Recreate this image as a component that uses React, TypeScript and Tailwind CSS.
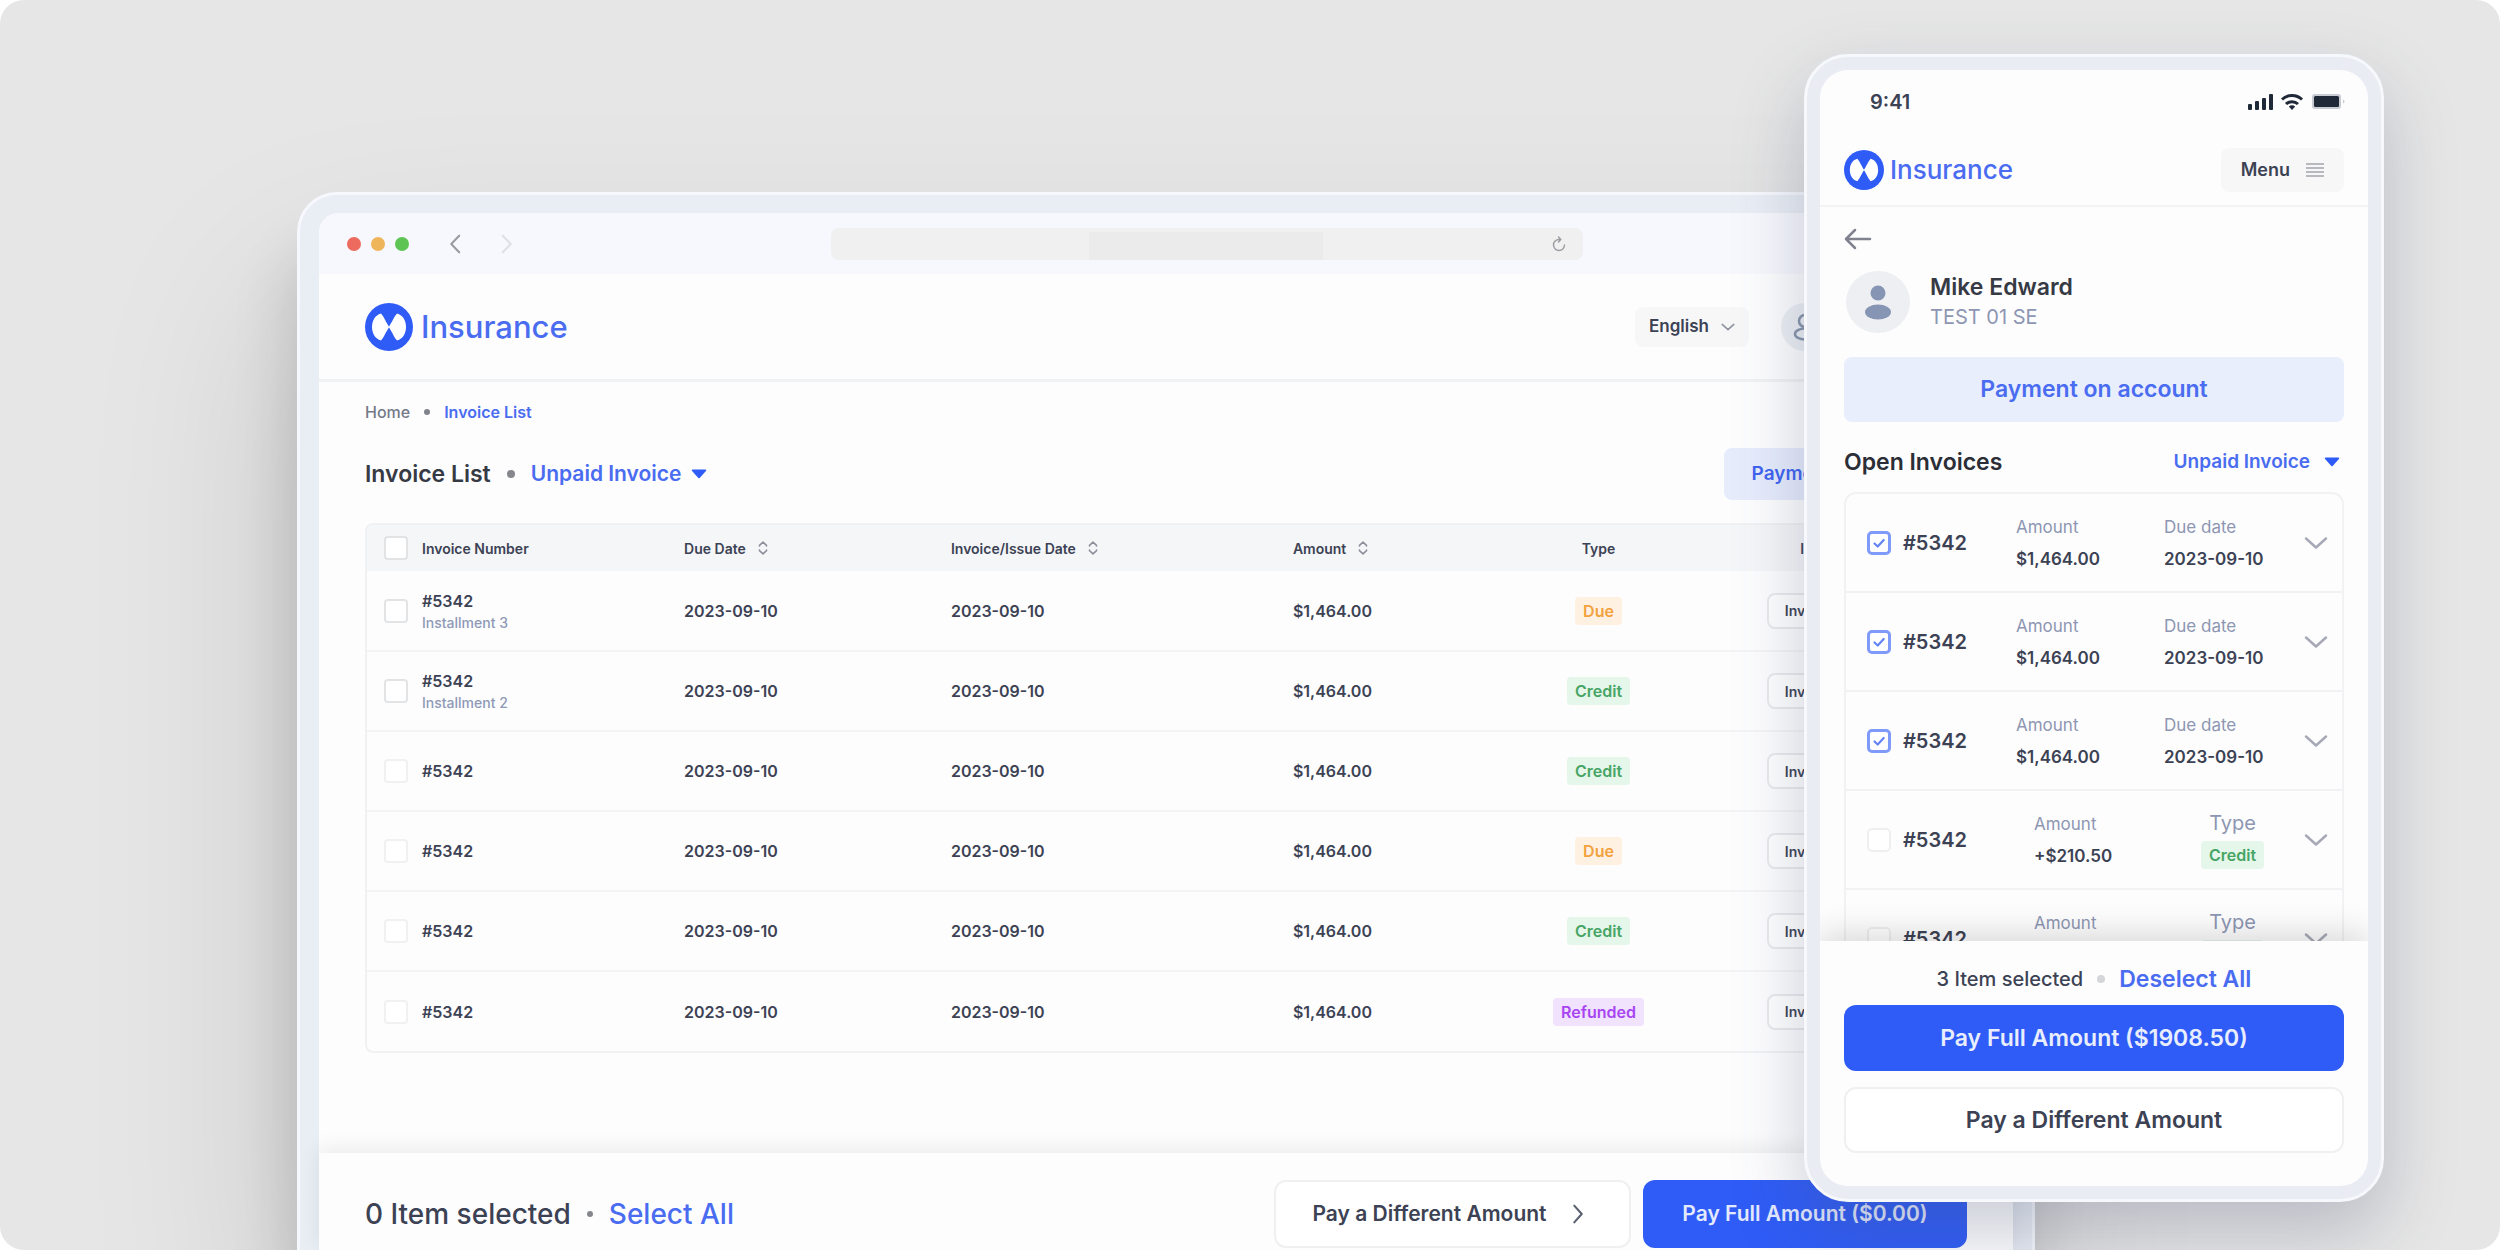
import { ReactNode } from "react";

const ink = "text-[#3c4254]";

function Logo({ small = false }: { small?: boolean }) {
  return (
    <a href="#" className={small ? "flex items-center gap-1.5" : "flex items-center gap-2"}>
      <svg viewBox="0 0 48 48" className={small ? "size-10" : "size-12"} aria-hidden="true">
        <circle cx="24" cy="24" r="24" fill="#2f5cf6" />
        <path d="M16 10.500 C10 12 7 18 7 24 s3 12 9 13.500 C18.500 35 21.500 28 24.200 24 C21.500 20 18.500 13 16 10.500Z" fill="#fff" />
        <path d="M32 10.500 C38 12 41 18 41 24 s-3 12 -9 13.500 C29.500 35 26.500 28 23.800 24 C26.500 20 29.500 13 32 10.500Z" fill="#fff" />
      </svg>
      <span className={small ? "text-[26px] leading-8 font-medium text-[#4a6cf0]" : "text-[31px] leading-10 font-medium text-[#4a6cf0]"}>Insurance</span>
    </a>
  );
}

function Chevron({ className, d = "M2 5 L12 14 L22 5", box = "0 0 24 19" }: { className: string; d?: string; box?: string }) {
  return (
    <svg viewBox={box} className={className} fill="none" stroke="currentColor" strokeWidth="2.500" strokeLinecap="round" strokeLinejoin="round" aria-hidden="true">
      <path d={d} />
    </svg>
  );
}

function Caret() {
  return (
    <svg viewBox="0 0 16 10" className="h-2.5 w-4" fill="#2f5cf6" aria-hidden="true">
      <path d="M1.500 0.500h13a.8.8 0 0 1 .6 1.300L8.700 9a1 1 0 0 1-1.400 0L.9 1.800A.8.8 0 0 1 1.500.500z" />
    </svg>
  );
}

function Sort() {
  return (
    <svg viewBox="0 0 10 14" className="h-3.5 w-2.5" fill="none" stroke="#8b8f9a" strokeWidth="1.600" strokeLinecap="round" strokeLinejoin="round" aria-hidden="true">
      <path d="M1.500 5V4.300L5 1.200l3.500 3.100V5M1.500 9v.7L5 12.800l3.500-3.100V9" />
    </svg>
  );
}

const badgeStyle: Record<string, string> = {
  Due: "bg-[#fef1e2] text-[#f3a13c]",
  Credit: "bg-[#e5f6ea] text-[#46a564]",
  Refunded: "bg-[#f1e2fd] text-[#a845f3]",
};

function Badge({ type }: { type: string }) {
  return <span className={`inline-block rounded-[4px] px-2 text-base leading-7 font-semibold ${badgeStyle[type]}`}>{type}</span>;
}

function Check({ label, faint = false }: { label: string; faint?: boolean }) {
  return (
    <input
      type="checkbox"
      aria-label={label}
      className={`block size-6 appearance-none rounded-[4px] border-2 bg-white ${faint ? "border-[#f1f1f2]" : "border-[#e2e3e5]"}`}
    />
  );
}

const rows = [
  { note: "Installment 3", type: "Due" },
  { note: "Installment 2", type: "Credit" },
  { note: "", type: "Credit" },
  { note: "", type: "Due" },
  { note: "", type: "Credit" },
  { note: "", type: "Refunded" },
];

function Th({ children, sort = false, center = false }: { children: ReactNode; sort?: boolean; center?: boolean }) {
  return (
    <th scope="col" className={`h-[46px] p-0 font-semibold ${center ? "text-center" : "text-left"}`}>
      {sort ? (
        <button className="flex items-center gap-3">
          {children}
          <Sort />
        </button>
      ) : (
        children
      )}
    </th>
  );
}

function InvoiceTable() {
  return (
    <div className="overflow-hidden rounded-lg border-2 border-[#f0f1f3]">
      <table className={`w-full table-fixed border-collapse ${ink}`}>
        <colgroup>
          <col className="w-[55px]" />
          <col className="w-[16.400%]" />
          <col className="w-[16.700%]" />
          <col className="w-[21.400%]" />
          <col className="w-[13.750%]" />
          <col className="w-[10.750%]" />
          <col />
        </colgroup>
        <thead className="bg-[#f5f6f8] text-[14px]">
          <tr>
            <th className="p-0 pl-[17px]">
              <Check label="Select all invoices" />
            </th>
            <Th>Invoice Number</Th>
            <Th sort>Due Date</Th>
            <Th sort>Invoice/Issue Date</Th>
            <Th sort>Amount</Th>
            <Th center>Type</Th>
            <Th center>Invoice</Th>
          </tr>
        </thead>
        <tbody className="text-base font-semibold">
          {rows.map((r, i) => (
            <tr key={i} className="h-20 border-b-2 border-[#f4f4f6] last:border-b-0">
              <td className="p-0 pl-[17px]">
                <Check label={`Select row ${i + 1}`} faint={!r.note} />
              </td>
              <td className="p-0">
                <div className="leading-6">#5342</div>
                {r.note && <div className="text-[14px] leading-5 font-medium text-[#8e99b6]">{r.note}</div>}
              </td>
              <td className="p-0">2023-09-10</td>
              <td className="p-0">2023-09-10</td>
              <td className="p-0">$1,464.00</td>
              <td className="p-0 text-center">
                <Badge type={r.type} />
              </td>
              <td className="p-0 text-center">
                <button className="h-9 rounded-lg border-2 border-[#e9eaed] bg-white px-4 text-[14px]">Invoice PDF</button>
              </td>
            </tr>
          ))}
        </tbody>
      </table>
    </div>
  );
}

function Browser() {
  return (
    <section className="mr-[465px] ml-[297px] flex min-h-0 flex-1 flex-col rounded-t-[40px] border-[3px] border-b-0 border-[#f6f8fd] bg-[#e9edf4] px-[19px] pt-[18px] shadow-[-6px_60px_60px_rgba(0,0,0,0.140),-20px_100px_200px_rgba(0,0,0,0.120)]">
      <div className="flex min-h-0 flex-1 flex-col rounded-t-[20px] bg-[#fdfdfe]">
        <div className="grid h-[61px] shrink-0 grid-cols-[484px_752px_1fr] items-center rounded-t-[20px] bg-[#f7f8fd] px-7">
          <div className="flex items-center gap-2.5">
            <span className="size-3.5 rounded-full bg-[#ec6a5e]" />
            <span className="size-3.5 rounded-full bg-[#eeb55a]" />
            <span className="size-3.5 rounded-full bg-[#5ec454]" />
            <button aria-label="Back" className="ml-[30px] text-[#9a9ba3]">
              <Chevron className="h-5 w-3" box="0 0 14 24" d="M12 2 L2.500 12 L12 22" />
            </button>
            <button aria-label="Forward" className="ml-[30px] text-[#dfe0e6]">
              <Chevron className="h-5 w-3" box="0 0 14 24" d="M2 2 L11.500 12 L2 22" />
            </button>
          </div>
          <div className="flex h-8 items-stretch rounded-lg bg-[#f0f0f1] pr-4">
            <input aria-label="Address" className="mt-1 mr-auto ml-[258px] w-[234px] bg-[#ebebec]" />
            <button aria-label="Reload" className="text-[#9b9ca1]">
              <svg viewBox="0 0 16 16" className="size-4" fill="none" stroke="currentColor" strokeWidth="1.400" strokeLinecap="round" aria-hidden="true">
                <path d="M13.500 9A5.500 5.500 0 1 1 8 3.500h1.500M7.500 1l2.300 2.500L7.500 6" />
              </svg>
            </button>
          </div>
        </div>

        <header className="flex h-[108px] shrink-0 items-center justify-between border-b-[3px] border-[#f1f2f3] px-[46px]">
          <Logo />
          <div className="flex items-center gap-8">
            <button className={`flex h-10 items-center gap-3 rounded-lg bg-[#f7f7f8] px-3.5 text-[17px] font-semibold ${ink}`}>
              English
              <Chevron className="h-3.5 w-3.5 text-[#8d919c]" />
            </button>
            <button aria-label="Account" className="flex h-12 w-[186px] items-center gap-3 rounded-full bg-[#eceff3] px-3 text-[#8795ab]">
              <svg viewBox="0 0 24 28" className="h-7 w-6" fill="none" stroke="currentColor" strokeWidth="2.500" aria-hidden="true">
                <circle cx="12" cy="8" r="6" />
                <ellipse cx="12" cy="21" rx="10" ry="5.500" />
              </svg>
            </button>
          </div>
        </header>

        <main className="flex min-h-0 flex-1 flex-col px-[46px]">
          <nav aria-label="Breadcrumb" className="mt-[18px] flex items-center gap-3.5 text-base leading-6">
            <a href="#" className="font-medium text-[#757a88]">Home</a>
            <span className="size-1.5 rounded-full bg-[#80838c]" />
            <a href="#" className="font-semibold text-[#4a6cf0]">Invoice List</a>
          </nav>
          <div className="mt-6 flex items-center justify-between">
            <div className="flex items-center gap-4">
              <h1 className="text-[23px] leading-8 font-semibold text-[#363a44]">Invoice List</h1>
              <span className="size-2 rounded-full bg-[#85878d]" />
              <button className="flex items-center gap-2.5 text-[21px] leading-8 font-semibold text-[#4a6cf0]">
                Unpaid Invoice
                <Caret />
              </button>
            </div>
            <button className="h-[52px] w-[243px] rounded-lg bg-[#e6ecfc] text-[19px] font-semibold text-[#3f63f0]">Payment on account</button>
          </div>
          <div className="mt-[23px]">
            <InvoiceTable />
          </div>
        </main>

        <footer className="flex h-[97px] shrink-0 items-center justify-between bg-[#fdfdfe] px-[46px] pt-6 shadow-[0_-4px_20px_rgba(0,0,0,0.080)]">
          <div className="flex items-center gap-4 text-[28px] leading-10 font-medium">
            <span className={ink}>0 Item selected</span>
            <span className="size-1.5 rounded-full bg-[#85878d]" />
            <button className="text-[#4a6cf0]">Select All</button>
          </div>
          <div className="flex gap-3">
            <button className={`flex h-[68px] w-[357px] items-center justify-center gap-6 rounded-xl border-2 border-[#f0f0f2] bg-white pr-2 text-[21px] font-semibold ${ink}`}>
              Pay a Different Amount
              <Chevron className="h-5 w-3.5 text-[#5b6070]" box="0 0 14 24" d="M2.500 2 L11.500 12 L2.500 22" />
            </button>
            <button className="h-[68px] w-[324px] rounded-xl bg-[#2f5cf6] text-[21px] font-semibold text-[#e4eafe]">Pay Full Amount ($0.00)</button>
          </div>
        </footer>
      </div>
    </section>
  );
}

function Item({ selected = false }: { selected?: boolean }) {
  return (
    <li className="flex h-[99px] shrink-0 items-center border-b-2 border-[#f2f2f4] pl-[21px]">
      <label className={`flex items-center gap-3 text-[20px] font-semibold ${ink} ${selected ? "w-[149px]" : "w-[167px]"}`}>
        <span className="relative block size-6">
          <input
            type="checkbox"
            defaultChecked={selected}
            className={`block size-6 appearance-none rounded-[5px] bg-white ${selected ? "border-[3px] border-[#7f9af8]" : "border-2 border-[#efeff1]"}`}
          />
          {selected && (
            <svg viewBox="0 0 24 24" className="absolute inset-0 size-6" fill="none" stroke="#6484f6" strokeWidth="2.200" strokeLinecap="round" strokeLinejoin="round" aria-hidden="true">
              <path d="M7.500 12.500l3.200 3 6-6.500" />
            </svg>
          )}
        </span>
        #5342
      </label>
      <div className={`flex flex-col gap-2 ${selected ? "w-[148px]" : "w-[167px]"}`}>
        <span className="text-[17px] leading-6 text-[#8d96b2]">Amount</span>
        <span className={`text-[17px] leading-6 font-semibold ${ink}`}>{selected ? "$1,464.00" : "+$210.50"}</span>
      </div>
      {selected ? (
        <div className="flex flex-col gap-2">
          <span className="text-[17px] leading-6 text-[#8d96b2]">Due date</span>
          <span className={`text-[17px] leading-6 font-semibold ${ink}`}>2023-09-10</span>
        </div>
      ) : (
        <div className="flex flex-col items-center gap-1.5">
          <span className="text-[20px] leading-6 text-[#8d96b2]">Type</span>
          <Badge type="Credit" />
        </div>
      )}
      <button aria-label="Show details" className="mr-3.5 ml-auto text-[#a7a9b6]">
        <Chevron className="h-5 w-6" />
      </button>
    </li>
  );
}

function Phone() {
  return (
    <section className={`absolute top-[54px] right-[116px] flex h-[1148px] w-[580px] flex-col rounded-[44px] border-[3px] border-[#f6f8fc] bg-[#e9edf3] p-[13px] shadow-[0_30px_70px_rgba(70,80,110,0.280)] ${ink}`}>
      <div className="flex min-h-0 flex-1 flex-col overflow-hidden rounded-[28px] bg-[#fdfdfe]">
        <div className="flex h-[67px] shrink-0 items-center justify-between pr-[22px] pb-[3px] pl-[50px]">
          <span className="text-[20px] font-semibold">9:41</span>
          <svg viewBox="0 0 98 20" className="h-5 w-[98px]" fill="#1f2937" aria-hidden="true">
            <rect x="0" y="12" width="4" height="6" rx="1" />
            <rect x="7" y="9" width="4" height="9" rx="1" />
            <rect x="14" y="6" width="4" height="12" rx="1" />
            <rect x="21" y="2" width="4" height="16" rx="1" />
            <g fill="none" stroke="#1f2937" strokeWidth="3">
              <path d="M34 7.500a14.500 14.500 0 0 1 20 0" />
              <path d="M38 12a9 9 0 0 1 12 0" />
            </g>
            <path d="M44 18l-3.200-3.400a4.800 4.800 0 0 1 6.400 0z" />
            <rect x="64" y="2" width="29" height="15" rx="3" fill="#c9ccd2" />
            <rect x="66" y="4" width="25" height="11" rx="1.500" />
            <path d="M95 7.500c2 .8 2 3.200 0 4z" fill="#c9ccd2" />
          </svg>
        </div>
        <header className="flex h-[70px] shrink-0 items-center justify-between border-b-2 border-[#f3f3f5] px-6 pb-[3px]">
          <Logo small />
          <button className="flex h-11 items-center gap-4 rounded-lg bg-[#f7f7f8] px-5 text-[18px] font-semibold">
            Menu
            <svg viewBox="0 0 18 14" className="h-3.5 w-[18px]" stroke="#a3a5ab" strokeWidth="1.500" aria-hidden="true">
              <path d="M0 1h18M0 5h18M0 9h18M0 13h18" />
            </svg>
          </button>
        </header>
        <div className="flex min-h-0 flex-1 flex-col overflow-hidden px-6">
          <a href="#" aria-label="Back" className="mt-5 text-[#80838f]">
            <svg viewBox="0 0 28 24" className="h-6 w-7" fill="none" stroke="currentColor" strokeWidth="2.500" strokeLinecap="round" strokeLinejoin="round" aria-hidden="true">
              <path d="M11 3L2 12l9 9M2 12h24" />
            </svg>
          </a>
          <div className="mt-5 flex items-center gap-5">
            <svg viewBox="0 0 64 62" className="ml-0.5 h-[62px] w-16" aria-hidden="true">
              <ellipse cx="32" cy="31" rx="32" ry="31" fill="#eeeff2" />
              <circle cx="32" cy="22" r="7.500" fill="#8795b4" />
              <ellipse cx="32" cy="41" rx="13" ry="7.500" fill="#8795b4" />
            </svg>
            <div>
              <div className="text-[23px] leading-[30px] font-semibold text-[#363a44]">Mike Edward</div>
              <div className="text-[20px] leading-[30px] text-[#8d96b2]">TEST 01 SE</div>
            </div>
          </div>
          <button className="mt-6 h-[65px] shrink-0 rounded-lg bg-[#e8eefc] text-[23px] font-semibold text-[#4a6cf0]">Payment on account</button>
          <div className="mt-6 flex items-center justify-between">
            <h2 className="text-[23px] leading-8 font-semibold text-[#2b2e36]">Open Invoices</h2>
            <button className="flex items-center gap-3.5 pr-1 text-[19px] leading-8 font-semibold text-[#4a6cf0]">
              Unpaid Invoice
              <Caret />
            </button>
          </div>
          <ul className="mt-3.5 flex min-h-0 flex-1 flex-col overflow-hidden rounded-t-xl border-2 border-b-0 border-[#f2f2f4]">
            <Item selected />
            <Item selected />
            <Item selected />
            <Item />
            <Item />
          </ul>
        </div>
        <footer className="relative flex shrink-0 flex-col bg-[#fdfdfe] px-6 pt-5 pb-[33px] shadow-[0_-8px_30px_rgba(0,0,0,0.140)]">
          <div className="flex h-9 items-center justify-center gap-3.5">
            <span className="text-[20px] font-medium">3 Item selected</span>
            <span className="size-2 rounded-full bg-[#d5d6da]" />
            <button className="text-[23px] font-semibold text-[#4a6cf0]">Deselect All</button>
          </div>
          <button className="mt-2 h-[66px] rounded-xl bg-[#2f5cf6] text-[23px] font-semibold text-[#e9eefe]">Pay Full Amount ($1908.50)</button>
          <button className="mt-4 h-[66px] rounded-xl border-2 border-[#f0f0f2] bg-white text-[23px] font-semibold">Pay a Different Amount</button>
        </footer>
      </div>
    </section>
  );
}

export default function App() {
  return (
    <div className="bg-white font-[Inter,sans-serif]">
      <div className="relative flex h-screen flex-col overflow-hidden rounded-[24px] bg-[#e6e6e6] pt-[192px]">
        <Browser />
        <Phone />
      </div>
    </div>
  );
}
